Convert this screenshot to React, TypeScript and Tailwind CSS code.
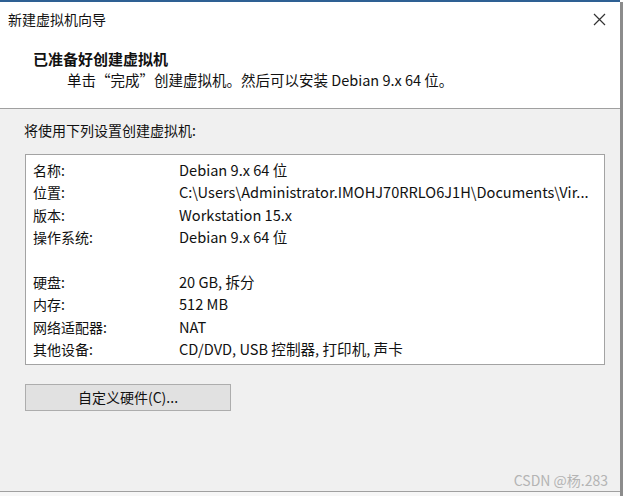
import React from 'react';

const rows: [string, string][] = [
  ['名称:', 'Debian 9.x 64 位'],
  ['位置:', 'C:\\Users\\Administrator.IMOHJ70RRLO6J1H\\Documents\\Vir...'],
  ['版本:', 'Workstation 15.x'],
  ['操作系统:', 'Debian 9.x 64 位'],
  ['', ''],
  ['硬盘:', '20 GB, 拆分'],
  ['内存:', '512 MB'],
  ['网络适配器:', 'NAT'],
  ['其他设备:', 'CD/DVD, USB 控制器, 打印机, 声卡'],
];

export default function App() {
  return (
    <div
      className="w-[623px] h-[496px] flex flex-col bg-white text-[#111] overflow-hidden"
      style={{ fontFamily: '"Noto Sans CJK SC", "Noto Sans", sans-serif' }}
    >
      {/* window top edge */}
      <div className="h-[2px] bg-[#2e6093] mr-[3px]" />
      <div className="flex flex-1 min-h-0">
        <div className="flex-1 flex flex-col">
          {/* title bar */}
          <div className="h-[35px] flex items-center justify-between pl-2 pr-[14px]">
            <span className="text-[14px]">新建虚拟机向导</span>
            <svg width="13" height="13" viewBox="0 0 13 13" className="text-[#333]">
              <path d="M1 1 L12 12 M12 1 L1 12" stroke="currentColor" strokeWidth="1.2" fill="none" />
            </svg>
          </div>

          {/* header */}
          <div className="h-[71px] pt-[11px]">
            <div className="pl-[33px] text-[15px] font-bold leading-[22px]">已准备好创建虚拟机</div>
            <div className="pl-[67px] text-[14.5px] leading-[20px] whitespace-nowrap">
              单击“完成”创建虚拟机。然后可以安装 Debian 9.x 64 位。
            </div>
          </div>
          <div className="h-px bg-[#a0a0a0]" />

          {/* body */}
          <div className="flex-1 bg-[#f0f0f0] flex flex-col pl-[24px] pt-[11px]">
            <div className="text-[14px] leading-[20px]">将使用下列设置创建虚拟机:</div>
            <div className="mt-[14px] ml-px w-[580px] h-[211px] border border-[#a3a3a3] bg-white px-[7px] pt-[4px] text-[14px]">
              {rows.map(([k, v], i) => (
                <div key={i} className="flex h-[22.4px] leading-[22.4px] whitespace-nowrap">
                  <span className="w-[146px] shrink-0">{k}</span>
                  <span className="text-[14.6px]">{v}</span>
                </div>
              ))}
            </div>
            <button className="mt-[19px] ml-px w-[206px] h-[27px] bg-[#e1e1e1] border border-[#adadad] text-[14px] text-[#111] flex items-center justify-center">
              自定义硬件(C)...
            </button>
            <div className="flex-1" />
            <div className="flex justify-end pr-[12px] pb-[1px] text-[14px] leading-[20px] text-[#b4b4b4]">
              CSDN @杨.283
            </div>
          </div>
          <div className="h-px bg-[#a0a0a0]" />
          <div className="h-[4px] bg-[#f7f7f7]" />
        </div>
        {/* right window edge */}
        <div className="w-[3px] bg-[#8c8c8c]" />
      </div>
    </div>
  );
}
